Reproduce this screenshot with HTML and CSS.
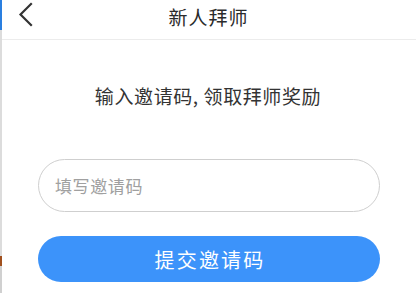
FILE: index.html
```html
<!DOCTYPE html>
<html lang="zh">
<head>
<meta charset="utf-8">
<link rel="stylesheet" href="styles.css">
</head>
<body>
<div class="page">
  <div class="edge"></div>
  <div class="main">
    <header class="bar">
      <svg class="back" width="16" height="26" viewBox="0 0 16 26"><path d="M13 2 L2.5 12.5 L13 23" fill="none" stroke="#333" stroke-width="2.2" stroke-linecap="square"/></svg>
      <div class="title">新人拜师</div>
    </header>
    <p class="intro">输入邀请码, 领取拜师奖励</p>
    <div class="form">
      <div class="input">填写邀请码</div>
      <div class="btn">提交邀请码</div>
    </div>
  </div>
</div>
</body>
</html>
```
FILE: styles.css
```css
html, body { margin: 0; padding: 0; background: #fff; }
body { font-family: "Noto Sans CJK SC", "Noto Sans", sans-serif; color: #333; }
.page { display: flex; width: 416px; height: 293px; overflow: hidden; }
.edge { width: 2px; flex: none; background: linear-gradient(#2a7fe0 0 30px, #dcdcdc 30px 256px, #a0501e 256px 266px, #d0d0d0 266px); }
.main { flex: 1; display: flex; flex-direction: column; }
.bar { position: relative; height: 39px; border-bottom: 1px solid #ececec; display: flex; align-items: center; justify-content: center; }
.back { position: absolute; left: 16px; top: 2px; }
.title { font-size: 19px; line-height: 1; letter-spacing: 1px; margin-left: -1px; margin-top: -6px; color: #2b2b2b; }
.intro { margin: 44px 0 0; text-align: center; font-size: 19px; line-height: 24px; letter-spacing: 0.6px; color: #333; margin-left: -2px; }
.form { display: flex; flex-direction: column; gap: 24px; margin: 51px 0 0 36px; width: 342px; }
.input { height: 51px; border: 1px solid #cfcfcf; border-radius: 27px; display: flex; align-items: center; padding-left: 16px; font-size: 17px; color: #a0a0a0; letter-spacing: 0.6px; }
.btn { height: 46px; border-radius: 23px; background: #3c93fa; color: #fff; display: flex; align-items: center; justify-content: center; font-size: 20px; letter-spacing: 2.2px; padding-left: 2px; }
```
